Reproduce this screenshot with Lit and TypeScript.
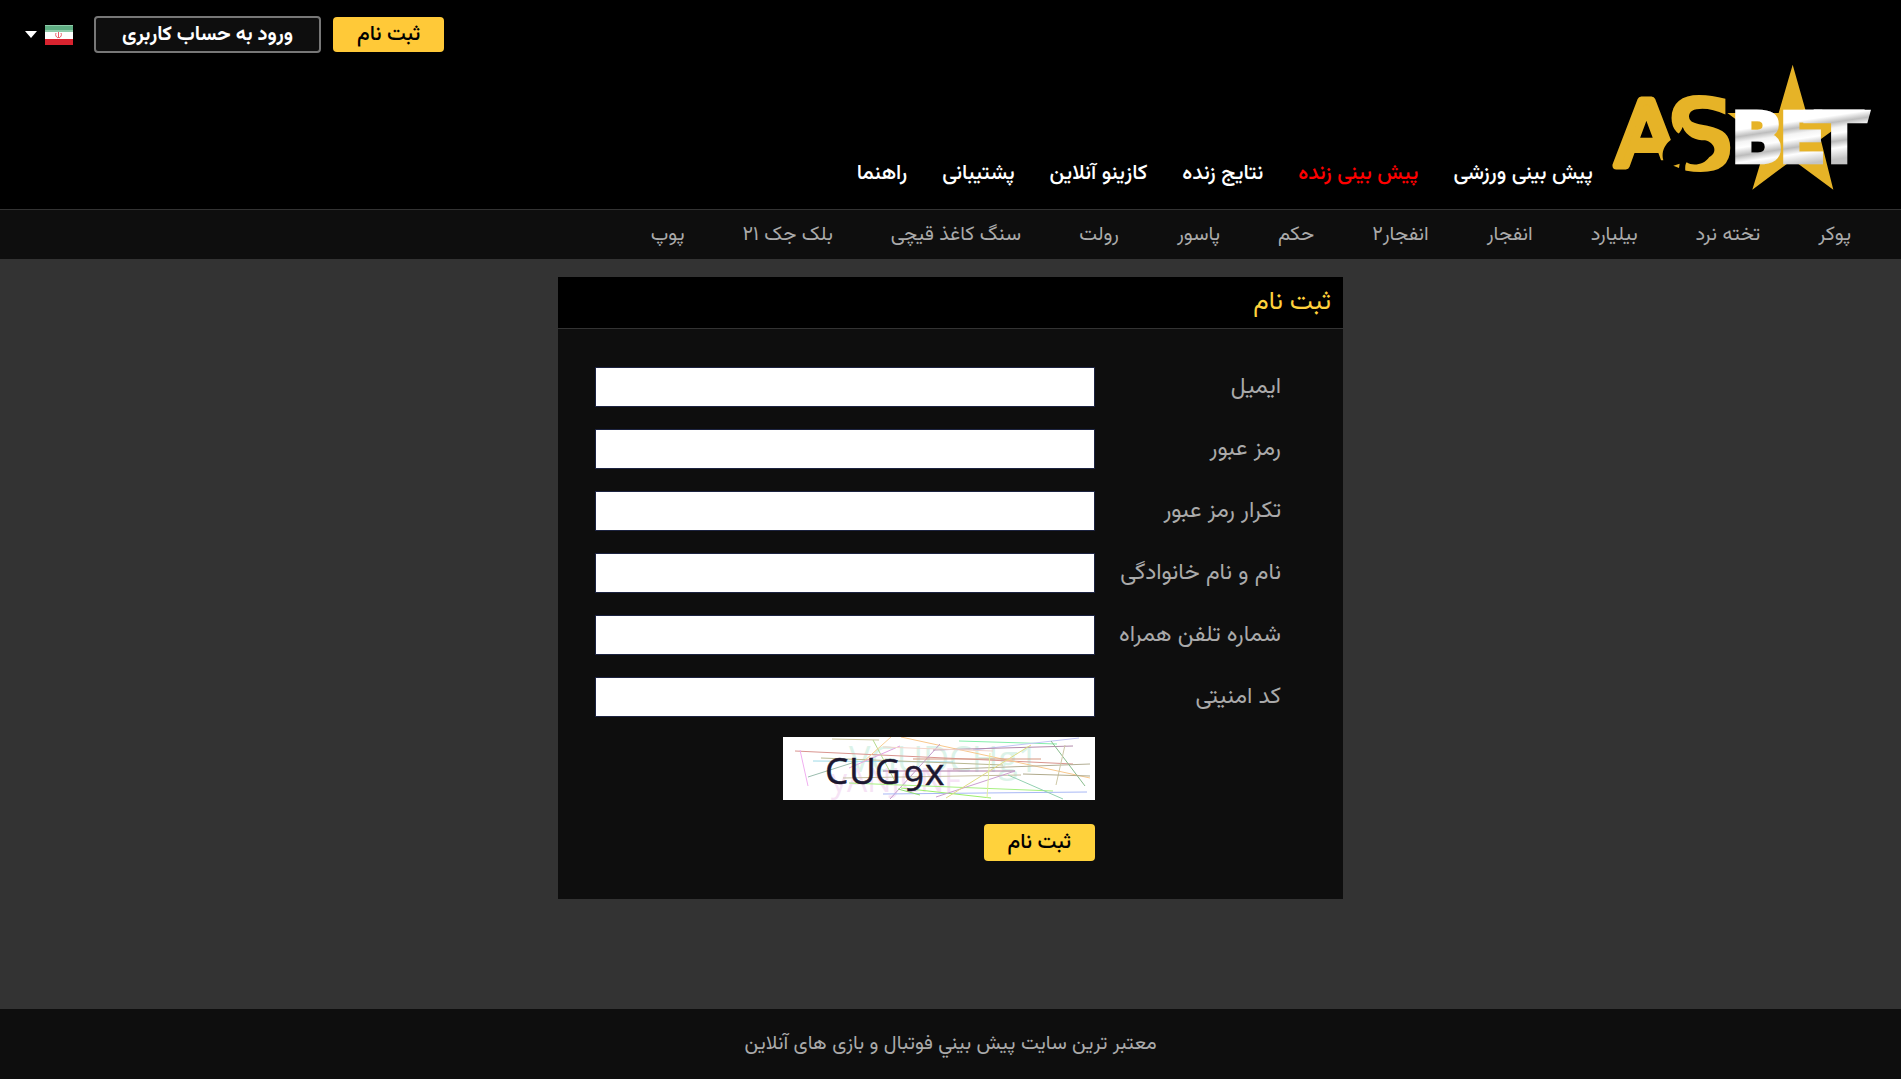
import { LitElement, html, css, svg } from "lit";
import { customElement } from "lit/decorators.js";

const mainLinks = [
  { text: "پیش بینی ورزشی" },
  { text: "پیش بینی زنده", live: true },
  { text: "نتایج زنده" },
  { text: "کازینو آنلاین" },
  { text: "پشتیبانی" },
  { text: "راهنما" },
];

const gameLinks = [
  "پوکر", "تخته نرد", "بیلیارد", "انفجار", "انفجار۲", "حکم",
  "پاسور", "رولت", "سنگ کاغذ قیچی", "بلک جک ۲۱", "پوپ",
];

const fields = [
  { id: "email", type: "email", text: "ایمیل" },
  { id: "password", type: "password", text: "رمز عبور" },
  { id: "repeat", type: "password", text: "تکرار رمز عبور" },
  { id: "name", type: "text", text: "نام و نام خانوادگی" },
  { id: "phone", type: "tel", text: "شماره تلفن همراه" },
  { id: "code", type: "text", text: "کد امنیتی" },
];

// Noise strokes of the security image: x1, y1, x2, y2, colour
const strokes: [number, number, number, number, string][] = [
  [12, 14, 290, 27, "#d9958f"],
  [17, 13, 25, 49, "#f0aef0"],
  [30, 24, 170, 25, "#9fdbe8"],
  [25, 40, 72, 25, "#9bbcae"],
  [38, 21, 220, 28, "#b9b890"],
  [49, 2, 96, 3, "#cbc59b"],
  [90, 3, 112, 44, "#b4d98d"],
  [108, 0, 80, 25, "#f8cf94"],
  [118, 0, 307, 41, "#f8c88c"],
  [117, 9, 66, 31, "#e3a3e0"],
  [157, 7, 107, 62, "#c59bcb"],
  [176, 4, 274, 7, "#84efab"],
  [190, 13, 296, 1, "#c3c6f6"],
  [150, 13, 290, 9, "#b28bab"],
  [130, 22, 258, 22, "#d3957f"],
  [170, 32, 307, 27, "#b3ae94"],
  [100, 34, 232, 34, "#b07aa5"],
  [60, 41, 238, 38, "#c5bda0"],
  [66, 46, 270, 54, "#a6f080"],
  [100, 57, 304, 55, "#a8b8f5"],
  [118, 51, 208, 61, "#9cf06c"],
  [153, 60, 232, 34, "#cb9fd0"],
  [163, 61, 248, 8, "#e0dc84"],
  [207, 16, 204, 61, "#e2efa0"],
  [225, 38, 280, 62, "#92d0b0"],
  [268, 4, 302, 49, "#88bb8c"],
  [282, 8, 273, 48, "#cdc7a6"],
  [115, 52, 137, 58, "#8fe070"],
  [210, 14, 100, 10, "#f3d5cb"],
  [240, 37, 307, 39, "#b0aa8c"],
];

@customElement("asbet-logo")
export class AsbetLogo extends LitElement {
  static styles = css`
    :host { display: block; }
    .logo { display: block; width: 262px; height: 129px; }
    .gold { font-family: "DejaVu Sans", sans-serif; fill: #e6b327; }
    .a {
      font-size: 269px;
      stroke: #e6b327;
      stroke-width: 24px;
      stroke-linejoin: round;
    }
    .s {
      font-size: 306px;
      font-weight: 700;
      stroke: #000;
      stroke-width: 10px;
      paint-order: stroke;
    }
    .steel {
      font-family: "DejaVu Sans", sans-serif;
      font-size: 215px;
      font-weight: 700;
      fill: url(#steel);
      stroke: url(#steel);
      stroke-width: 8px;
    }
  `;

  render() {
    return html`
      <svg class="logo" viewBox="60 40 786 387" direction="ltr" role="img" aria-label="ASBET">
        <defs>
          <linearGradient id="steel" gradientUnits="userSpaceOnUse" x1="600" y1="180" x2="625" y2="346">
            <stop offset="0" stop-color="#fff" />
            <stop offset=".22" stop-color="#fff" />
            <stop offset=".34" stop-color="#bdbdbd" />
            <stop offset=".44" stop-color="#f4f4f4" />
            <stop offset=".54" stop-color="#fff" />
            <stop offset=".68" stop-color="#bcbcbc" />
            <stop offset=".8" stop-color="#fff" />
            <stop offset="1" stop-color="#c4c4c4" />
          </linearGradient>
        </defs>
        <path fill="#e6b327" d="M608 45 649 190H800L692 269 730 420 608 330 487 420 530 278 412 190H566Z" />
        <text class="gold a" x="77" y="350">A</text>
        <text class="gold s" x="223" y="363">S</text>
        <path fill="#000" d="M278 232C290 262 318 272 345 272 378 280 382 312 358 322 342 346 308 350 290 338 284 346 286 356 286 372H208V332H220C210 292 240 272 254 262 266 254 274 244 278 232Z" />
        <path fill="#e6b327" d="M250 348 269 342 267 355Z" />
        <text class="steel" x="420" y="341">B</text>
        <text class="steel" x="564" y="341">E</text>
        <text class="steel" x="674" y="341">T</text>
        <path fill="url(#steel)" d="M640 180H843L832 221H640Z" />
      </svg>
    `;
  }
}

@customElement("security-image")
export class SecurityImage extends LitElement {
  static styles = css`
    :host { display: block; }
    .image { display: block; width: 312px; height: 63px; background: #fff; }
    .code { font-family: "Open Sans", "Noto Sans", sans-serif; fill: #1c1730; stroke: #1c1730; stroke-width: 0.5px; }
    .ghost { font-family: "Open Sans", "Noto Sans", sans-serif; }
    .mint { font-size: 36px; fill: #dcf3e9; }
    .pink { font-size: 32px; fill: #f6e3f5; }
  `;

  render() {
    return html`
      <svg class="image" viewBox="0 0 312 63" direction="ltr" role="img" aria-label="CUG9x">
        <text class="ghost mint" x="66" y="35">VGUDCHg1</text>
        <text class="ghost pink" x="48" y="55">yANJCNF</text>
        ${strokes.map(
          ([x1, y1, x2, y2, colour]) =>
            svg`<line x1=${x1} y1=${y1} x2=${x2} y2=${y2} stroke=${colour} stroke-width="1" />`,
        )}
        <text class="code" y="47" font-size="37"><tspan x="42">C</tspan><tspan x="66">U</tspan><tspan x="92" font-size="35">G</tspan><tspan x="121" y="54" font-size="35">9</tspan><tspan x="142" y="48" font-size="37">x</tspan></text>
      </svg>
    `;
  }
}

@customElement("app-root")
export class AppRoot extends LitElement {
  static styles = css`
    :host {
      display: flex;
      flex-direction: column;
      min-height: 100vh;
      background: #333;
      color: #aaa;
      font-family: Vazirmatn, Vazir, "Noto Sans Arabic", "DejaVu Sans Condensed", "DejaVu Sans", sans-serif;
      font-size: 20px;
      line-height: 26px;
    }
    a { color: inherit; text-decoration: none; white-space: nowrap; }
    button { font: inherit; cursor: pointer; }
    .header { background: #000; border-bottom: 1px solid #333; padding: 16px 29px 17px 20px; }
    .account { display: flex; justify-content: flex-end; align-items: center; gap: 12px; }
    .button {
      box-sizing: border-box;
      height: 35px;
      padding: 0 24px;
      border: 0;
      border-radius: 4px;
      background: #ffc938;
      color: #000;
      font-size: 21px;
      font-weight: 500;
    }
    .submit { background: #ffd23c; height: 37px; }
    .login {
      height: 37px;
      padding: 0 26px;
      border: 2px solid #777;
      background: #0e0e0e;
      color: #fff;
      font-size: 20px;
      font-weight: 700;
    }
    .language {
      display: flex;
      align-items: center;
      gap: 8px;
      padding: 0 5px;
      margin-inline-start: 4px;
      border: 0;
      background: none;
    }
    .flag { width: 28px; height: 20px; }
    .caret { width: 12px; height: 7px; }
    .brand { display: flex; align-items: flex-end; gap: 17px; margin-top: 10px; }
    .menu { display: flex; gap: 35px; padding-bottom: 5px; color: #fff; font-size: 21px; font-weight: 500; }
    .live { color: #f00; }
    .games {
      display: flex;
      gap: 58px;
      padding: 12px 50px 11px;
      background: #0e0e0e;
    }
    .main { flex: 1; padding: 18px 16px 48px; }
    .card { max-width: 785px; margin: 0 auto; background: #0e0e0e; }
    .title {
      margin: 0;
      padding: 10px 12px;
      background: #000;
      border-bottom: 1px solid #333;
      color: #ffd23c;
      font-size: 26px;
      line-height: 31px;
      font-weight: 400;
    }
    .form { padding: 38px 62px 38px 37px; }
    .fields { display: grid; grid-template-columns: 186px 1fr; row-gap: 22px; align-items: center; }
    .label { font-size: 23px; white-space: nowrap; }
    .input {
      box-sizing: border-box;
      width: 100%;
      height: 40px;
      padding: 0 8px;
      border: 1px solid #1c2340;
      border-radius: 0;
      background: #fff;
      font: inherit;
    }
    .actions {
      display: flex;
      flex-direction: column;
      align-items: flex-start;
      gap: 24px;
      margin-top: 20px;
      margin-inline-start: 186px;
    }
    .footer { padding: 22px 16px; background: #0e0e0e; text-align: center; }
  `;

  render() {
    return html`
      <header class="header" dir="rtl">
        <div class="account">
          <button class="button" type="button">ثبت نام</button>
          <button class="button login" type="button">ورود به حساب کاربری</button>
          <button class="language" type="button" aria-label="فارسی">
            <svg class="flag" viewBox="0 0 28 20">
              <path fill="#5fae83" d="M0 0h28v7H0z" />
              <path fill="#8fcbaa" d="M0 0h28v1H0zM0 5h28v2H0z" />
              <path fill="#fff" d="M0 7h28v7H0z" />
              <path fill="#d8232f" d="M0 14h28v6H0z" />
              <path fill="none" stroke="#e8606a" d="M13.500 7v6M11 8c-1 2 0 4 2 5M16 8c1 2 0 4-2 5" />
            </svg>
            <svg class="caret" viewBox="0 0 12 7"><path fill="#fff" d="M0 0h12L6 7z" /></svg>
          </button>
        </div>
        <div class="brand">
          <asbet-logo></asbet-logo>
          <nav class="menu">
            ${mainLinks.map((l) => html`<a class=${l.live ? "live" : "item"} href="#">${l.text}</a>`)}
          </nav>
        </div>
      </header>
      <nav class="games" dir="rtl">${gameLinks.map((t) => html`<a href="#">${t}</a>`)}</nav>
      <main class="main" dir="rtl">
        <section class="card">
          <h1 class="title">ثبت نام</h1>
          <form class="form">
            <div class="fields">
              ${fields.map(
                (f) => html`
                  <label class="label" for=${f.id}>${f.text}</label>
                  <input class="input" id=${f.id} name=${f.id} type=${f.type} />
                `,
              )}
            </div>
            <div class="actions">
              <security-image></security-image>
              <button class="button submit" type="button">ثبت نام</button>
            </div>
          </form>
        </section>
      </main>
      <footer class="footer" dir="rtl">معتبر ترین سایت پیش بیني فوتبال و بازی های آنلاین</footer>
    `;
  }
}
